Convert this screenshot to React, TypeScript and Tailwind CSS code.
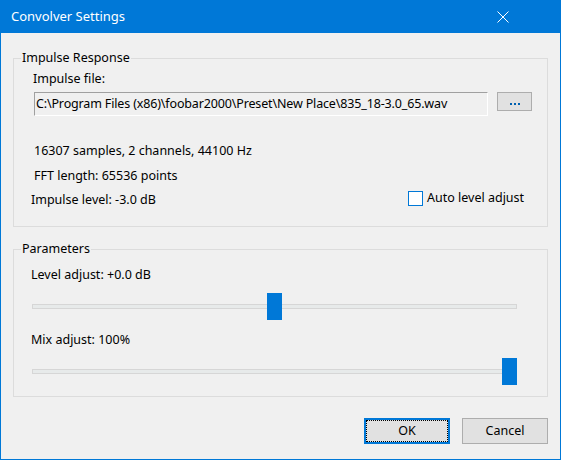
import { useState } from 'react';

const FONT = "font-['Noto_Sans','Liberation_Sans',sans-serif]";

function GroupBox({ label, className, children }: { label: string; className: string; children: React.ReactNode }) {
  return (
    <div className={`relative border border-[#dcdcdc] ${className}`}>
      <span className="absolute -top-[9px] left-[7px] px-[1px] bg-[#f0f0f0] leading-[16px]">{label}</span>
      {children}
    </div>
  );
}

function Slider({ value, className }: { value: number; className: string }) {
  // thumb is 15px wide, travels along the full track
  const left = Math.round((485 - 15) * value);
  return (
    <div className={`relative w-[485px] h-[27px] flex items-center ${className}`}>
      <div className="w-full h-[5px] bg-[#e7eaea] border border-[#d6d6d6]" />
      <div className="absolute top-0 w-[15px] h-[27px] bg-[#0078d7]" style={{ left }} />
    </div>
  );
}

export default function App() {
  const [autoLevel, setAutoLevel] = useState(false);
  const [level] = useState(0.5);
  const [mix] = useState(1);

  return (
    <div className={`w-[561px] h-[460px] border border-[#0078d7] bg-[#f0f0f0] flex flex-col text-[12.5px] text-black ${FONT}`}>
      {/* Title bar */}
      <div className="h-[32px] bg-[#0078d7] flex items-center justify-between pl-[10px] text-white text-[13px]">
        <span>Convolver Settings</span>
        <svg width="12" height="12" viewBox="0 0 12 12" className="mr-[51px]">
          <path d="M0.5 0.5 L11.5 11.5 M11.5 0.5 L0.5 11.5" stroke="white" strokeWidth="1" />
        </svg>
      </div>

      <div className="flex flex-col px-[12px]">
        <GroupBox label="Impulse Response" className="mt-[25px] h-[169px]">
          <div className="mt-[12px] ml-[19px] leading-[16px]">Impulse file:</div>
          <div className="mt-[5px] ml-[20px] flex items-start gap-[9px]">
            <div className="w-[454px] h-[24px] border border-t-[#a0a0a0] border-l-[#a0a0a0] border-b-white border-r-white flex items-center pl-[1px] tracking-[-0.15px] whitespace-nowrap overflow-hidden">
              C:\Program Files (x86)\foobar2000\Preset\New Place\835_18-3.0_65.wav
            </div>
            <button className="w-[35px] h-[19px] bg-[#e1e1e1] border border-[#adadad] flex items-center justify-center gap-[2px] pt-[5px]">
              <span className="w-[2px] h-[2px] bg-[#0060b0]" />
              <span className="w-[2px] h-[2px] bg-[#0060b0]" />
              <span className="w-[2px] h-[2px] bg-[#0060b0]" />
            </button>
          </div>
          <div className="mt-[27px] ml-[20px] leading-[16px]">16307 samples, 2 channels, 44100 Hz</div>
          <div className="mt-[9px] ml-[20px] leading-[16px]">FFT length: 65536 points</div>
          <div className="mt-[8px] ml-[17px] flex items-center leading-[16px]">
            <span className="w-[377px]">Impulse level: -3.0 dB</span>
            <label className="flex items-center gap-[4px] -mt-[4px]">
              <button
                onClick={() => setAutoLevel(!autoLevel)}
                className="w-[15px] h-[15px] bg-white border border-[#0078d7] flex items-center justify-center"
              >
                {autoLevel && (
                  <svg width="11" height="9" viewBox="0 0 11 9">
                    <path d="M1 4.5 L4 7.5 L10 1" stroke="#000" strokeWidth="1.5" fill="none" />
                  </svg>
                )}
              </button>
              <span>Auto level adjust</span>
            </label>
          </div>
        </GroupBox>

        <GroupBox label="Parameters" className="mt-[22px] h-[148px]">
          <div className="mt-[17px] ml-[17px] leading-[16px]">Level adjust: +0.0 dB</div>
          <Slider value={level} className="mt-[10px] ml-[18px]" />
          <div className="mt-[12px] ml-[17px] leading-[16px]">Mix adjust: 100%</div>
          <Slider value={mix} className="mt-[10px] ml-[18px]" />
        </GroupBox>

        <div className="mt-[21px] flex justify-end gap-[12px]">
          <button className="w-[86px] h-[26px] bg-[#e1e1e1] border-2 border-[#0078d7] outline outline-1 outline-dotted outline-black outline-offset-[-3px]">
            OK
          </button>
          <button className="w-[86px] h-[26px] bg-[#e1e1e1] border border-[#adadad]">Cancel</button>
        </div>
      </div>
    </div>
  );
}
